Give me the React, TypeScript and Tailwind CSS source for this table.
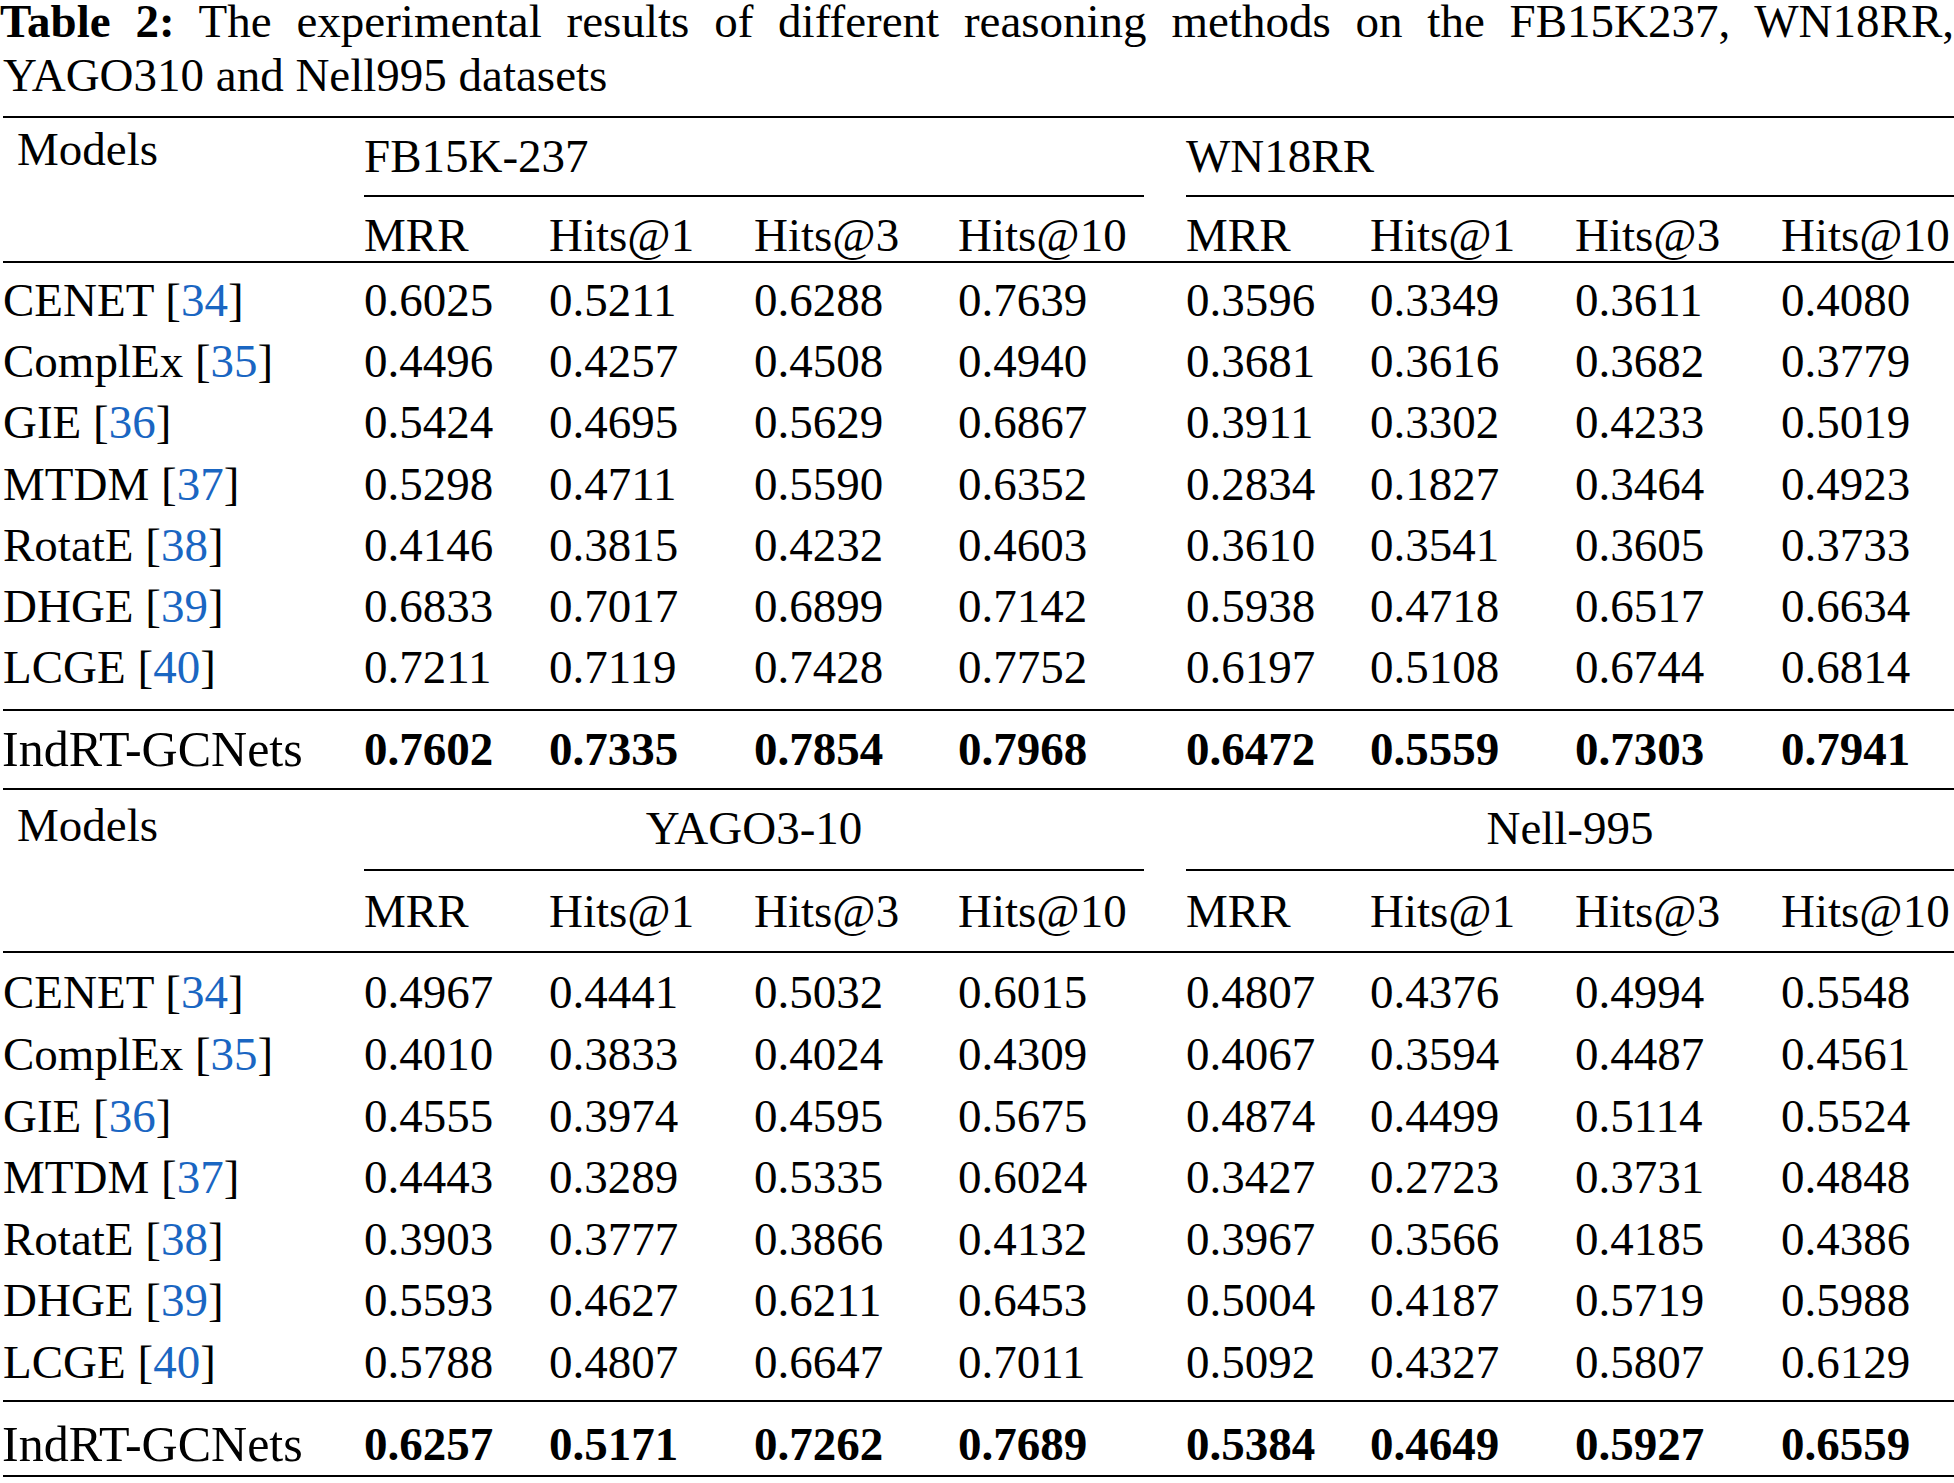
const cols =
  "grid grid-cols-[364px_185px_205px_204px_228px_184px_205px_206px_1fr]";

type Row = { name: string; ref?: string; values: string[] };

const blockA: Row[] = [
  { name: "CENET", ref: "34", values: ["0.6025", "0.5211", "0.6288", "0.7639", "0.3596", "0.3349", "0.3611", "0.4080"] },
  { name: "ComplEx", ref: "35", values: ["0.4496", "0.4257", "0.4508", "0.4940", "0.3681", "0.3616", "0.3682", "0.3779"] },
  { name: "GIE", ref: "36", values: ["0.5424", "0.4695", "0.5629", "0.6867", "0.3911", "0.3302", "0.4233", "0.5019"] },
  { name: "MTDM", ref: "37", values: ["0.5298", "0.4711", "0.5590", "0.6352", "0.2834", "0.1827", "0.3464", "0.4923"] },
  { name: "RotatE", ref: "38", values: ["0.4146", "0.3815", "0.4232", "0.4603", "0.3610", "0.3541", "0.3605", "0.3733"] },
  { name: "DHGE", ref: "39", values: ["0.6833", "0.7017", "0.6899", "0.7142", "0.5938", "0.4718", "0.6517", "0.6634"] },
  { name: "LCGE", ref: "40", values: ["0.7211", "0.7119", "0.7428", "0.7752", "0.6197", "0.5108", "0.6744", "0.6814"] },
];
const oursA = ["0.7602", "0.7335", "0.7854", "0.7968", "0.6472", "0.5559", "0.7303", "0.7941"];

const blockB: Row[] = [
  { name: "CENET", ref: "34", values: ["0.4967", "0.4441", "0.5032", "0.6015", "0.4807", "0.4376", "0.4994", "0.5548"] },
  { name: "ComplEx", ref: "35", values: ["0.4010", "0.3833", "0.4024", "0.4309", "0.4067", "0.3594", "0.4487", "0.4561"] },
  { name: "GIE", ref: "36", values: ["0.4555", "0.3974", "0.4595", "0.5675", "0.4874", "0.4499", "0.5114", "0.5524"] },
  { name: "MTDM", ref: "37", values: ["0.4443", "0.3289", "0.5335", "0.6024", "0.3427", "0.2723", "0.3731", "0.4848"] },
  { name: "RotatE", ref: "38", values: ["0.3903", "0.3777", "0.3866", "0.4132", "0.3967", "0.3566", "0.4185", "0.4386"] },
  { name: "DHGE", ref: "39", values: ["0.5593", "0.4627", "0.6211", "0.6453", "0.5004", "0.4187", "0.5719", "0.5988"] },
  { name: "LCGE", ref: "40", values: ["0.5788", "0.4807", "0.6647", "0.7011", "0.5092", "0.4327", "0.5807", "0.6129"] },
];
const oursB = ["0.6257", "0.5171", "0.7262", "0.7689", "0.5384", "0.4649", "0.5927", "0.6559"];

const metrics = ["MRR", "Hits@1", "Hits@3", "Hits@10", "MRR", "Hits@1", "Hits@3", "Hits@10"];

function Rule() {
  return <div className="ml-[3px] h-[2px] bg-black" />;
}

function ModelName({ row }: { row: Row }) {
  return (
    <div className="pl-[3px] whitespace-nowrap">
      {row.name} [<span className="text-[#1a66c2]">{row.ref}</span>]
    </div>
  );
}

function Body({ rows, leading, pt, pb }: { rows: Row[]; leading: string; pt: string; pb: string }) {
  return (
    <div className={`${cols} ${leading} ${pt} ${pb}`}>
      {rows.map((row) => (
        <div key={row.name} className="contents">
          <ModelName row={row} />
          {row.values.map((v, i) => (
            <div key={i}>{v}</div>
          ))}
        </div>
      ))}
    </div>
  );
}

function Ours({ values, pt, pb }: { values: string[]; pt: string; pb: string }) {
  return (
    <div className={`${cols} leading-[52px] ${pt} ${pb}`}>
      <div className="pl-[2px] text-[50px] whitespace-nowrap">IndRT-GCNets</div>
      {values.map((v, i) => (
        <div key={i} className="font-bold">
          {v}
        </div>
      ))}
    </div>
  );
}

export default function App() {
  return (
    <div className="w-full bg-white text-black text-[47px] font-['Liberation_Serif',serif] overflow-hidden">
      {/* caption */}
      <div className="mt-[1px] leading-[40px] text-justify [text-align-last:justify] whitespace-nowrap">
        <span className="font-bold">Table 2:</span> The experimental results of different reasoning methods on the FB15K237, WN18RR,
      </div>
      <div className="mt-[7px] leading-[54px] pl-[3px]">YAGO310 and Nell995 datasets</div>

      <div className="mt-[14px]">
        <Rule />

        {/* header one */}
        <div className={`${cols} leading-[52px]`}>
          <div className="row-span-3 pt-[5px] pl-[17px]">Models</div>
          <div className="col-span-4 pt-[12px] pb-[13px]">FB15K-237</div>
          <div className="col-span-4 pt-[12px] pb-[13px]">WN18RR</div>
          <div className="col-span-4 mr-[42px] h-[2px] bg-black" />
          <div className="col-span-4 h-[2px] bg-black" />
          {metrics.map((m, i) => (
            <div key={i} className="pt-[12px] whitespace-nowrap">
              {m}
            </div>
          ))}
        </div>
        <Rule />

        <Body rows={blockA} leading="leading-[61.2px]" pt="pt-[7px]" pb="pb-[11px]" />
        <Rule />
        <Ours values={oursA} pt="pt-[12px]" pb="pb-[13px]" />
        <Rule />

        {/* header two */}
        <div className={`${cols} leading-[52px]`}>
          <div className="row-span-3 pt-[9px] pl-[17px]">Models</div>
          <div className="col-span-4 mr-[42px] pt-[12px] pb-[15px] text-center">YAGO3-10</div>
          <div className="col-span-4 pt-[12px] pb-[15px] text-center">Nell-995</div>
          <div className="col-span-4 mr-[42px] h-[2px] bg-black" />
          <div className="col-span-4 h-[2px] bg-black" />
          {metrics.map((m, i) => (
            <div key={i} className="pt-[14px] pb-[14px] whitespace-nowrap">
              {m}
            </div>
          ))}
        </div>
        <Rule />

        <Body rows={blockB} leading="leading-[61.6px]" pt="pt-[9px]" pb="pb-[6px]" />
        <Rule />
        <Ours values={oursB} pt="pt-[16px]" pb="pb-[5px]" />
        <Rule />
      </div>
    </div>
  );
}
